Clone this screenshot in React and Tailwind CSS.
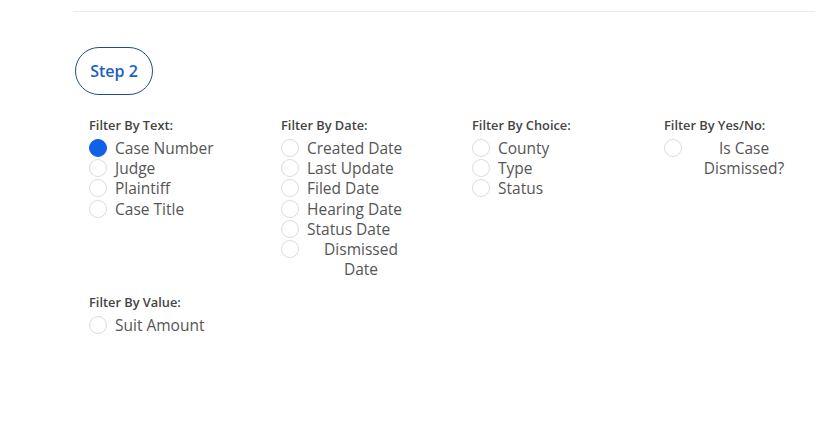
import { useState } from 'react'

const groups = [
  { title: 'Filter By Text:', items: ['Case Number', 'Judge', 'Plaintiff', 'Case Title'] },
  { title: 'Filter By Date:', items: ['Created Date', 'Last Update', 'Filed Date', 'Hearing Date', 'Status Date', 'Dismissed Date'] },
  { title: 'Filter By Choice:', items: ['County', 'Type', 'Status'] },
  { title: 'Filter By Yes/No:', items: ['Is Case Dismissed?'] },
]

function Radio({ label, checked, onSelect }) {
  return (
    <label className="flex items-start gap-2 cursor-pointer" onClick={onSelect}>
      <span
        className={`mt-[1px] w-[18px] h-[18px] shrink-0 rounded-full border ${
          checked ? 'bg-[#0f62e6] border-[#0f62e6]' : 'bg-white border-[#dcdcdc]'
        }`}
      />
      <span className="max-w-[108px] text-center text-[15.5px] leading-[20.2px] text-[#555]">{label}</span>
    </label>
  )
}

function Group({ title, items, selected, setSelected }) {
  return (
    <div className="flex flex-col">
      <div className="text-[12.8px] font-semibold text-[#444] leading-[16px] mb-[5px]">{title}</div>
      <div className="flex flex-col">
        {items.map(item => (
          <Radio key={item} label={item} checked={selected === item} onSelect={() => setSelected(item)} />
        ))}
      </div>
    </div>
  )
}

export default function App() {
  const [selected, setSelected] = useState('Case Number')

  return (
    <div className="w-[839px] h-[443px] bg-white" style={{ fontFamily: '"Open Sans", sans-serif' }}>
      <div className="ml-[73px] mr-[24px] pt-[11px]">
        <div className="border-t border-[#e8e8e8]" />
        <div className="mt-[35px] ml-[2px]">
          <div className="inline-flex items-center justify-center w-[78px] h-[48px] rounded-full border border-[#1e4d8f] text-[#1a5fc4] text-[16px] font-semibold">
            Step 2
          </div>
        </div>
        <div className="ml-[16px] mt-[22px] grid grid-cols-[192px_191px_192px_150px]">
          {groups.map(g => (
            <Group key={g.title} {...g} selected={selected} setSelected={setSelected} />
          ))}
        </div>
        <div className="ml-[16px] mt-[15px]">
          <Group title="Filter By Value:" items={['Suit Amount']} selected={selected} setSelected={setSelected} />
        </div>
      </div>
    </div>
  )
}
